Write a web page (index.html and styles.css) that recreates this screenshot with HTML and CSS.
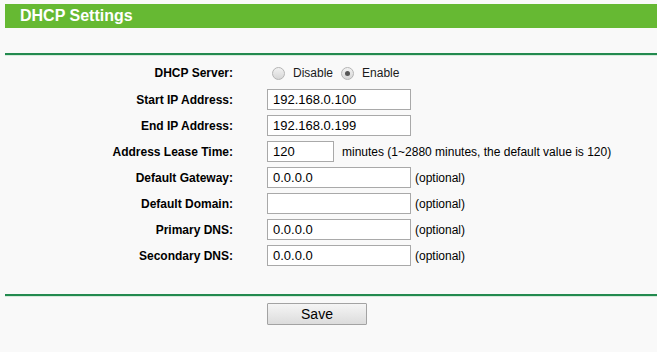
FILE: index.html
```html
<!DOCTYPE html>
<html lang="en">
<head>
  <meta charset="UTF-8">
  <title>DHCP Settings</title>
  <link rel="stylesheet" href="styles.css">
</head>
<body>
  <h2 class="title">DHCP Settings</h2>
  <div class="rule"></div>

  <div class="form">
    <label class="lbl">DHCP Server:</label>
    <div class="field radios">
      <span class="radio"></span><span class="opt">Disable</span>
      <span class="radio checked"></span><span class="opt">Enable</span>
    </div>

    <label class="lbl">Start IP Address:</label>
    <div class="field"><input type="text" value="192.168.0.100"></div>

    <label class="lbl">End IP Address:</label>
    <div class="field"><input type="text" value="192.168.0.199"></div>

    <label class="lbl">Address Lease Time:</label>
    <div class="field"><input type="text" class="short" value="120"><span class="note">minutes (1~2880 minutes, the default value is 120)</span></div>

    <label class="lbl">Default Gateway:</label>
    <div class="field"><input type="text" value="0.0.0.0"><span class="hint">(optional)</span></div>

    <label class="lbl">Default Domain:</label>
    <div class="field"><input type="text" value=""><span class="hint">(optional)</span></div>

    <label class="lbl">Primary DNS:</label>
    <div class="field"><input type="text" value="0.0.0.0"><span class="hint">(optional)</span></div>

    <label class="lbl">Secondary DNS:</label>
    <div class="field"><input type="text" value="0.0.0.0"><span class="hint">(optional)</span></div>
  </div>

  <div class="rule bottom"></div>
  <div class="actions">
    <button class="btn">Save</button>
  </div>
</body>
</html>
```

FILE: styles.css
```css
body {
  margin: 0;
  padding: 0;
  background: #f9f9f9;
  font-family: "Liberation Sans", Arial, sans-serif;
  color: #000;
  height: 352px;
  overflow: hidden;
}

.title {
  margin: 4px 0 0 5px;
  height: 24px;
  line-height: 24px;
  padding-left: 15px;
  background: #66b933;
  color: #fff;
  font-size: 16px;
  font-weight: bold;
}

.rule {
  margin: 25px 0 0 5px;
  border-top: 2px solid #238a4f;
  box-shadow: 0 1px 0 #d6ebdc;
}

.rule.bottom {
  margin-top: 28px;
}

.form {
  display: grid;
  grid-template-columns: 228px 1fr;
  grid-template-rows: 22px;
  grid-auto-rows: 21px;
  column-gap: 34px;
  row-gap: 5px;
  margin-top: 7px;
  padding-left: 5px;
  align-items: center;
}

.lbl {
  text-align: right;
  font-size: 12px;
  font-weight: bold;
}

.field {
  display: flex;
  align-items: center;
  height: 100%;
  font-size: 12px;
}

.radios {
  padding-left: 5px;
}

.radio {
  width: 11px;
  height: 11px;
  border: 1px solid #b4b4b4;
  border-radius: 50%;
  background: linear-gradient(#f2f2f2, #d6d6d6);
  margin-right: 8px;
  position: relative;
}

.radio.checked::after {
  content: "";
  position: absolute;
  left: 3px;
  top: 3px;
  width: 5px;
  height: 5px;
  border-radius: 50%;
  background: #555;
}

.opt {
  margin-right: 8px;
  color: #1a1a1a;
}

input {
  box-sizing: border-box;
  width: 144px;
  height: 21px;
  margin: 0;
  padding: 0 5px;
  border: 1px solid #a9a9a9;
  background: #fff;
  font-family: "Liberation Sans", Arial, sans-serif;
  font-size: 13px;
  color: #000;
  outline: none;
}

input.short {
  width: 67px;
}

.note {
  margin-left: 8px;
}

.hint {
  margin-left: 4px;
}

.actions {
  padding: 7px 0 0 267px;
}

.btn {
  box-sizing: border-box;
  width: 100px;
  height: 22px;
  padding: 0;
  border: 1px solid #a3a3a3;
  border-radius: 1px;
  background: linear-gradient(#f5f5f5, #dcdcdc);
  font-family: "Liberation Sans", Arial, sans-serif;
  font-size: 14px;
  color: #000;
}
```
